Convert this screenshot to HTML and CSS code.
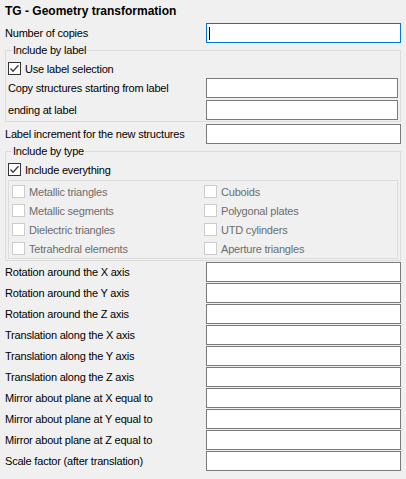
FILE: index.html
```html
<!DOCTYPE html>
<html>
<head>
<meta charset="utf-8">
<link rel="stylesheet" href="styles.css">
</head>
<body>
<div class="page">
  <div class="title">TG - Geometry transformation</div>

  <div class="row">
    <span class="lbl">Number of copies</span>
    <div class="field focus"><span class="caret"></span></div>
  </div>

  <fieldset class="group">
    <legend>Include by label</legend>
    <div class="cbrow">
      <span class="cb on"><svg viewBox="0 0 13 13" width="13" height="13"><polyline points="2.5,6.5 5,9.2 10.5,3.2" fill="none" stroke="#3a3a3a" stroke-width="1.3"/></svg></span>
      <span>Use label selection</span>
    </div>
    <div class="row in first">
      <span class="lbl">Copy structures starting from label</span>
      <div class="field narrow"></div>
    </div>
    <div class="row in">
      <span class="lbl">ending at label</span>
      <div class="field narrow"></div>
    </div>
  </fieldset>

  <div class="row after">
    <span class="lbl">Label increment for the new structures</span>
    <div class="field"></div>
  </div>

  <fieldset class="group type">
    <legend>Include by type</legend>
    <div class="cbrow">
      <span class="cb on"><svg viewBox="0 0 13 13" width="13" height="13"><polyline points="2.5,6.5 5,9.2 10.5,3.2" fill="none" stroke="#3a3a3a" stroke-width="1.3"/></svg></span>
      <span>Include everything</span>
    </div>
    <div class="panel">
      <div class="opt"><span class="cb dis"></span><span>Metallic triangles</span></div>
      <div class="opt"><span class="cb dis"></span><span>Cuboids</span></div>
      <div class="opt"><span class="cb dis"></span><span>Metallic segments</span></div>
      <div class="opt"><span class="cb dis"></span><span>Polygonal plates</span></div>
      <div class="opt"><span class="cb dis"></span><span>Dielectric triangles</span></div>
      <div class="opt"><span class="cb dis"></span><span>UTD cylinders</span></div>
      <div class="opt"><span class="cb dis"></span><span>Tetrahedral elements</span></div>
      <div class="opt"><span class="cb dis"></span><span>Aperture triangles</span></div>
    </div>
  </fieldset>

  <div class="list">
    <div class="row"><span class="lbl">Rotation around the X axis</span><div class="field"></div></div>
    <div class="row"><span class="lbl">Rotation around the Y axis</span><div class="field"></div></div>
    <div class="row"><span class="lbl">Rotation around the Z axis</span><div class="field"></div></div>
    <div class="row"><span class="lbl">Translation along the X axis</span><div class="field"></div></div>
    <div class="row"><span class="lbl">Translation along the Y axis</span><div class="field"></div></div>
    <div class="row"><span class="lbl">Translation along the Z axis</span><div class="field"></div></div>
    <div class="row"><span class="lbl">Mirror about plane at X equal to</span><div class="field"></div></div>
    <div class="row"><span class="lbl">Mirror about plane at Y equal to</span><div class="field"></div></div>
    <div class="row"><span class="lbl">Mirror about plane at Z equal to</span><div class="field"></div></div>
    <div class="row"><span class="lbl">Scale factor (after translation)</span><div class="field"></div></div>
  </div>
</div>
</body>
</html>
```

FILE: styles.css
```css
html, body {
  margin: 0;
  padding: 0;
  background: #f0f0f0;
}
body {
  font-family: "Liberation Sans", Arial, sans-serif;
  font-size: 11px;
  letter-spacing: -0.2px;
  color: #000;
}
.page {
  width: 406px;
  height: 479px;
  box-sizing: border-box;
  padding: 0 5px;
}
.title {
  height: 22px;
  line-height: 22px;
  font-size: 12px;
  font-weight: bold;
  letter-spacing: 0;
}
.row {
  display: flex;
  align-items: center;
  justify-content: space-between;
  height: 20px;
  margin-top: 1px;
}
.row.in { margin-top: 2px; }
.row.in.first { margin-top: 1px; }
.row.after { margin-top: 2px; }
.field {
  width: 195px;
  height: 20px;
  box-sizing: border-box;
  border: 1px solid #7a7a7a;
  background: #fff;
  position: relative;
}
.field.narrow { width: 192px; }
.field.focus { border-color: #0078d7; }
.caret {
  position: absolute;
  left: 2px;
  top: 3px;
  width: 1px;
  height: 13px;
  background: #000;
}
.group {
  margin: 1px 0 0 0;
  padding: 0 2px 1px 2px;
  border: 1px solid #dcdcdc;
  min-width: 0;
}
.group legend {
  margin-left: 4px;
  padding: 0 1px;
  line-height: 13px;
  height: 13px;
}
.cbrow {
  display: flex;
  align-items: center;
  gap: 4px;
  height: 17px;
  margin-top: 3px;
}
.cb {
  width: 13px;
  height: 13px;
  box-sizing: border-box;
  border: 1px solid #333;
  background: #fff;
  display: inline-flex;
  flex: none;
  position: relative;
}
.cb svg {
  position: absolute;
  left: -1px;
  top: -1px;
}
.cb.dis {
  border-color: #cccccc;
}
.panel {
  margin-top: 2px;
  border: 1px solid #dcdcdc;
  padding: 1px 0 0 3px;
  display: grid;
  grid-template-columns: 192px 1fr;
  grid-auto-rows: 19px;
}
.opt {
  display: flex;
  align-items: center;
  gap: 4px;
  color: #6d6d6d;
}
.list {
  margin-top: 1px;
}
.list .row { margin-top: 1px; }
```
